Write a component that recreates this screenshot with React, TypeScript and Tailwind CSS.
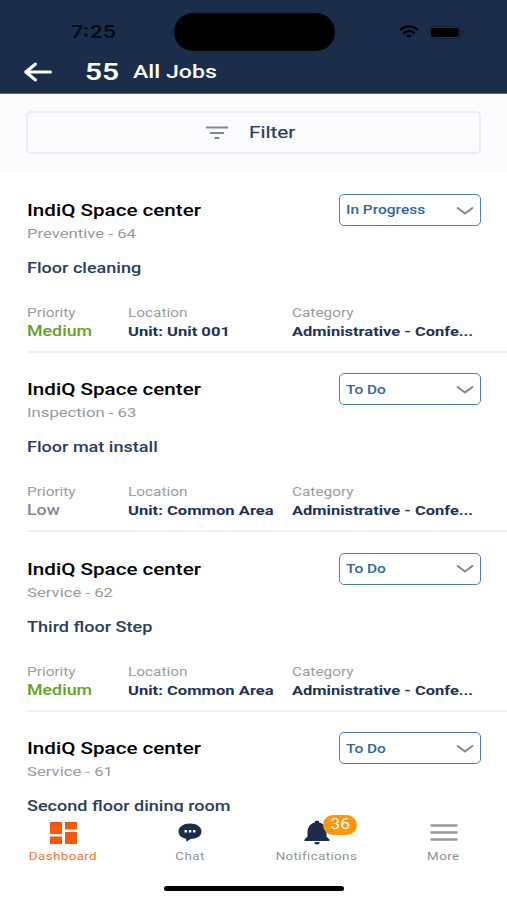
import React from 'react';
import clsx from 'clsx';

interface Job {
  id: number;
  type: string;
  title: string;
  status: string;
  priority: 'Medium' | 'Low';
  location: string;
}

const jobs: Job[] = [
  { id: 64, type: 'Preventive', title: 'Floor cleaning', status: 'In Progress', priority: 'Medium', location: 'Unit: Unit 001' },
  { id: 63, type: 'Inspection', title: 'Floor mat install', status: 'To Do', priority: 'Low', location: 'Unit: Common Area' },
  { id: 62, type: 'Service', title: 'Third floor Step', status: 'To Do', priority: 'Medium', location: 'Unit: Common Area' },
  { id: 61, type: 'Service', title: 'Second floor dining room', status: 'To Do', priority: 'Medium', location: 'Unit: Common Area' },
];

// Extended-width text; it grows from its left edge, or from the middle when centered.
const Wide = ({ className, centered, children }: { className?: string; centered?: boolean; children: React.ReactNode }) => (
  <span className={clsx('block w-max scale-x-[1.22] whitespace-nowrap', centered ? 'origin-center' : 'origin-left', className)}>
    {children}
  </span>
);

const StatusBar = () => (
  <div className="flex h-[52px] items-start pt-[13px]">
    <div className="flex h-[38px] w-[173.5px] items-center pl-[71px]">
      <Wide className="font-['Inter'] text-[17.5px] font-semibold text-[#050b16]">7:25</Wide>
    </div>
    <div className="h-[38px] w-[161px] rounded-[20px] bg-black" />
    <div className="flex h-[38px] items-center pl-[30px]">
      <div className="mt-2 flex w-[24px] gap-[3px]">
        <i className="h-[1.5px] w-[4px] bg-[#17274a]" />
        <i className="h-[1.5px] w-[4px] bg-[#17274a]" />
        <i className="h-[1.5px] w-[4px] bg-[#17274a]" />
        <i className="h-[1.5px] w-[4px] bg-[#17274a]" />
      </div>
      <svg className="ml-[9px] h-[14px] w-[22px]" viewBox="0 0 24 14" preserveAspectRatio="none" fill="none" stroke="#02060d" strokeWidth="2.5">
        <path d="M2.2 5.2C7.5 .2 16.5 .2 21.8 5.2" />
        <path d="M5.8 8.5C9.3 5.3 14.7 5.3 18.2 8.5" />
        <path d="M12 13.5 8.6 10.7C10.5 9 13.5 9 15.4 10.7Z" fill="#02060d" stroke="none" />
      </svg>
      <div className="ml-[9px] flex h-[13px] w-[32px] items-center justify-center rounded-[4px] border border-[#15223b]">
        <div className="h-[9px] w-[28px] rounded-[3px] bg-black" />
      </div>
      <div className="ml-[2px] h-[4px] w-[2px] rounded-r bg-[#15223b]" />
    </div>
  </div>
);

const Header = () => (
  <header className="h-[94px] shrink-0 border-b border-[#5d6a84] bg-[#1c2c4b] text-white">
    <StatusBar />
    <div className="flex h-[40px] items-center">
      <svg className="ml-[23px] h-[20px] w-[30px]" viewBox="0 0 30 20" fill="none" stroke="currentColor" strokeWidth="3" strokeLinecap="round" strokeLinejoin="round">
        <path d="M12.5 2 2.8 10 12.5 18M3 10H27.5" />
      </svg>
      <div className="ml-[32px] w-[48px]">
        <Wide className="text-[24.5px] font-semibold">55</Wide>
      </div>
      <Wide className="text-[19px] font-medium">All Jobs</Wide>
    </div>
  </header>
);

const FilterBar = () => (
  <div className="h-[78px] shrink-0 bg-[#fafbfd] px-[26px] pt-[17px]">
    <button className="flex h-[43px] w-[455px] items-center rounded-[5px] border-2 border-[#ebecef]">
      <svg className="ml-[178px] h-[14px] w-[22px]" viewBox="0 0 22 14" stroke="#85859a" strokeWidth="2">
        <path d="M0 1.5H22M4 7H18M8.5 12H13.5" />
      </svg>
      <div className="mt-px ml-[21px]">
        <Wide className="text-[17px] text-[#2b3b5a] [-webkit-text-stroke:0.2px]">Filter</Wide>
      </div>
    </button>
  </div>
);

const StatusSelect = ({ status }: { status: string }) => (
  <button className="flex h-[32px] w-[142px] items-center justify-between rounded-[5px] border-[1.5px] border-[#4a7fb5] pr-[6px] pl-[6px]">
    <Wide className="text-[12.7px] font-medium text-[#2d689f]">{status}</Wide>
    <svg className="h-[9px] w-[18px]" viewBox="0 0 18 9" fill="none" stroke="#85878c" strokeWidth="2">
      <path d="M1 1.5 9 7.5 17 1.5" />
    </svg>
  </button>
);

const Field = ({ label, className, children }: { label: string; className: string; children: React.ReactNode }) => (
  <div className={className}>
    <Wide className="text-[12.6px] leading-[18px] text-[#9b9da1]">{label}</Wide>
    {children}
  </div>
);

const JobCard = ({ job }: { job: Job }) => (
  <article className="ml-[27px] h-[179.4px] shrink-0 pt-[22px]">
    <div className="flex h-[50px] justify-between pr-[26px]">
      <div className="pt-[4px]">
        <Wide className="text-[16.9px] leading-[24px] font-medium text-black">IndiQ Space center</Wide>
        <Wide className="text-[13.7px] leading-[23px] text-[#97999e]">{job.type} - {job.id}</Wide>
      </div>
      <StatusSelect status={job.status} />
    </div>
    <Wide className="mt-[14px] text-[14.8px] leading-[20px] font-medium text-[#283d62]">{job.title}</Wide>
    <div className="mt-[26px] flex h-[49px] border-b-2 border-[#f1f1f2]">
      <Field label="Priority" className="w-[101px]">
        <Wide
          className={clsx(
            'text-[14.6px] leading-[18px] font-medium',
            job.priority === 'Medium' ? 'text-[#5fa31f]' : 'text-[#85878f]',
          )}
        >
          {job.priority}
        </Wide>
      </Field>
      <Field label="Location" className="w-[164px]">
        <Wide className="text-[13.6px] leading-[19px] font-bold text-[#203356]">{job.location}</Wide>
      </Field>
      <Field label="Category" className="w-[182px]">
        <Wide className="text-[13.5px] leading-[19px] font-bold text-[#203356]">Administrative - Confe...</Wide>
      </Field>
    </div>
  </article>
);

const Tab = ({ label, active, children }: { label: string; active?: boolean; children: React.ReactNode }) => (
  <div className="flex flex-1 flex-col items-center">
    <div className="flex h-[36px] items-center justify-center">{children}</div>
    <Wide
      centered
      className={clsx('mt-px text-[11px] leading-[16px] tracking-[0.3px]', active ? 'text-[#f5742a]' : 'text-[#909194]')}
    >
      {label}
    </Wide>
  </div>
);

const TabBar = () => (
  <nav className="h-[88px] shrink-0 bg-white">
    <div className="flex h-[72px]">
      <Tab label="Dashboard" active>
        <svg className="mt-[5px] h-[22px] w-[27px]" viewBox="0 0 27 22" fill="#f4590b">
          <path d="M0 0H12V12H0ZM0 14.5H12V22H0ZM15 0H27V7.5H15ZM15 10H27V22H15Z" />
        </svg>
      </Tab>
      <Tab label="Chat">
        <svg className="mt-[4px] h-[19px] w-[24px]" viewBox="0 0 24 19" fill="#1b2c4d">
          <path d="M12 .5C18.5 .5 23.5 3.8 23.5 8.5S18.5 16 12.5 16L8.5 18.8 8 15.7C3.5 15 .5 12.2 .5 8.5 .5 3.8 5.5 .5 12 .5Z" />
          <path d="M6.5 7H9V9.5H6.5ZM10.8 7H13.3V9.5H10.8ZM15 7H17.5V9.5H15Z" fill="#fff" />
        </svg>
      </Tab>
      <Tab label="Notifications">
        <div className="relative mt-[5px]">
          <svg className="h-[25px] w-[26px]" viewBox="0 0 26 25" fill="#1b2c4d">
            <path d="M13 .5C14.5 .5 15.2 1.3 15.2 2.4 19.8 3.5 22.5 7 22.5 12V16.5L25.5 19.5V21H.5V19.5L3.5 16.5V12C3.5 7 6.2 3.5 10.8 2.4 10.8 1.3 11.5 .5 13 .5ZM10.3 22H15.7C15.5 23.7 14.5 24.5 13 24.5S10.5 23.7 10.3 22Z" />
          </svg>
          <div className="absolute -top-[5px] left-[19px] flex h-[20px] w-[34px] items-center justify-center rounded-full bg-[#ff9509] text-white">
            <Wide centered className="text-[14.5px]">36</Wide>
          </div>
        </div>
      </Tab>
      <Tab label="More">
        <svg className="mt-[4px] h-[17px] w-[28px]" viewBox="0 0 28 17" stroke="#98989a" strokeWidth="2.5" strokeLinecap="round">
          <path d="M1.5 1.5H26.5M1.5 8.5H26.5M1.5 15.5H26.5" />
        </svg>
      </Tab>
    </div>
    <div className="mx-auto mt-[2px] h-[5px] w-[180px] rounded-full bg-black" />
  </nav>
);

const App = () => {
  return (
    <div className="flex h-[900px] w-[507px] flex-col overflow-hidden bg-white font-['Roboto',sans-serif]">
      <Header />
      <FilterBar />
      <main className="flex min-h-0 flex-1 flex-col overflow-hidden">
        {jobs.map((job) => (
          <JobCard key={job.id} job={job} />
        ))}
      </main>
      <TabBar />
    </div>
  );
};

export default App;
